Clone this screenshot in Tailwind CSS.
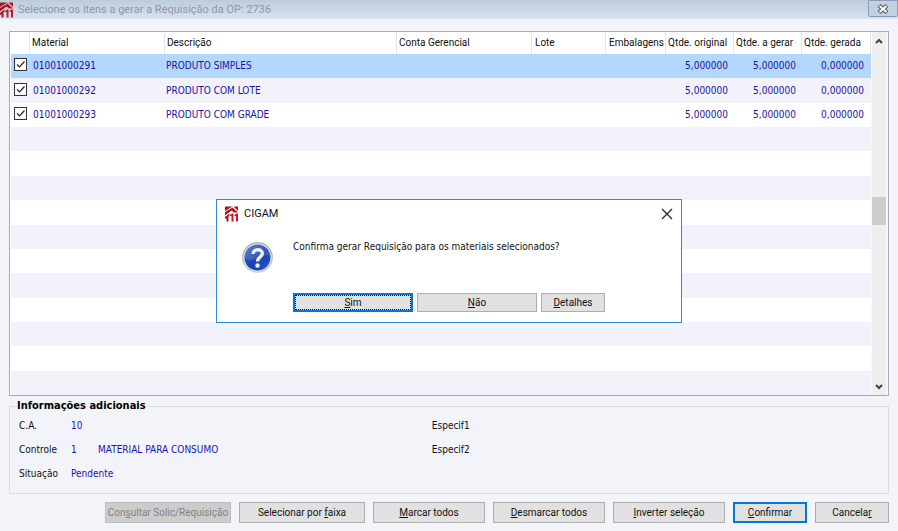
<!DOCTYPE html>
<html lang="pt-BR">
<head>
<meta charset="utf-8">
<meta name="viewport" content="width=device-width, initial-scale=1">
<title>CIGAM - Requisição da OP</title>
<script src="https://cdn.jsdelivr.net/npm/@tailwindcss/browser@4"></script>
</head>
<body class="flex h-screen min-h-[500px] min-w-[860px] flex-col bg-[#f3f4fa] font-['DejaVu_Sans_Condensed','DejaVu_Sans',sans-serif] text-[10px] leading-4 text-[#111]">

<svg class="hidden" aria-hidden="true">
  <symbol id="logo" viewBox="0 0 14 16">
    <path d="M0 .5H7.500L0 5z" fill="#a3141d"/>
    <path d="M8.500 .5H13V5z" fill="#b5121c"/>
    <path d="M0 6 7.500 1.500 13 6.500H9L6.500 4.500 0 9.500z" fill="#b5121c"/>
    <path d="M0 11 4.500 7.500V9.500L3.500 10.500V15.500H1.500V12L0 13z" fill="#a3141d"/>
    <path d="M5 9 7 7.500H8.500V15.500H6.500V10H5z" fill="#d3141f"/>
    <path d="M9.500 9 11.500 7.500H13V15.500H11V10H9.500z" fill="#d3141f"/>
  </symbol>
</svg>

<header class="flex h-[19px] shrink-0 items-center bg-linear-to-b from-[#bdccda] to-[#d6e4f1]">
  <svg class="h-4 w-[14px]"><use href="#logo"/></svg>
  <h1 class="ml-1 font-[Roboto,sans-serif] text-[11px] text-[#8f979f]">Selecione os itens a gerar a Requisição da OP: 2736</h1>
  <button type="button" aria-label="Fechar janela" class="ml-auto flex h-[17px] w-[30px] items-center justify-center self-start rounded-b-[2px] border border-[#8b9cb8] bg-[#c3d0df]">
    <svg class="h-[10px] w-3" viewBox="0 0 12 10"><path d="M2 1.500 10 8.500M10 1.500 2 8.500" stroke="#555c69" stroke-width="4.200"/><path d="M2.500 2 9.500 8M9.500 2 2.500 8" stroke="#fff" stroke-width="2"/></svg>
  </button>
</header>

<main class="flex min-h-0 flex-1 flex-col px-[9px] pt-3 pb-2">
  <section class="flex min-h-0 flex-1 border border-[#a9abb2] bg-[#f3f4fa]" aria-label="Materiais">
    <table class="flex min-w-0 flex-1 flex-col bg-white pl-px">
      <thead class="block font-[Roboto,sans-serif] whitespace-nowrap">
        <tr class="grid h-[22px] grid-cols-[19px_135px_1fr_135px_74px_60px_68px_68px_69px] items-stretch text-left">
          <th class="border-r border-[#e4e4e4]" aria-label="Selecionado"></th>
          <th class="border-r border-[#e4e4e4] pt-[3px] pl-[2px] font-normal">Material</th>
          <th class="border-r border-[#e4e4e4] pt-[3px] pl-[2px] font-normal">Descrição</th>
          <th class="border-r border-[#e4e4e4] pt-[3px] pl-[2px] font-normal">Conta Gerencial</th>
          <th class="border-r border-[#e4e4e4] pt-[3px] pl-[3px] font-normal">Lote</th>
          <th class="border-r border-[#e4e4e4] pt-[3px] pl-[3px] font-normal">Embalagens</th>
          <th class="border-r border-[#e4e4e4] pt-[3px] pl-[2px] font-normal">Qtde. original</th>
          <th class="border-r border-[#e4e4e4] pt-[3px] pl-[2px] font-normal">Qtde. a gerar</th>
          <th class="border-r border-[#e4e4e4] pt-[3px] pl-[2px] font-normal">Qtde. gerada</th>
        </tr>
      </thead>
      <tbody id="linhas" class="grid min-h-0 flex-1 auto-rows-fr text-[#1c10a8]"></tbody>
    </table>
    <div class="flex w-[17px] flex-col items-center border-r-2 border-l border-[#f8f8fb] bg-[#efeff0]" role="scrollbar" aria-controls="linhas" aria-valuenow="50">
      <svg class="mt-[3px] h-3 w-3 shrink-0" viewBox="0 0 12 12"><path d="M3 8 6 5 9 8" fill="none" stroke="#444" stroke-width="2"/></svg>
      <div class="flex w-full flex-1 items-center pb-[6px]"><div class="h-7 w-full bg-[#cdcdcd]"></div></div>
      <svg class="mb-[2px] h-3 w-3 shrink-0" viewBox="0 0 12 12"><path d="M3 4 6 7 9 4" fill="none" stroke="#444" stroke-width="2"/></svg>
    </div>
  </section>

  <fieldset class="mt-1 h-[94px] shrink-0 border border-[#dcdde1] px-[9px]">
    <legend class="-ml-1 px-[2px] text-[11px] leading-3 font-bold text-black">Informações adicionais</legend>
    <div class="flex pt-[6px]">
      <dl class="grid w-12/25 grid-cols-[52px_27px_1fr] gap-y-2">
        <dt>C.A.</dt><dd class="col-span-2 text-[#1c10b8]">10</dd>
        <dt>Controle</dt><dd class="text-[#1c10b8]">1</dd><dd class="text-[#1c10b8]">MATERIAL PARA CONSUMO</dd>
        <dt>Situação</dt><dd class="col-span-2 text-[#1c10b8]">Pendente</dd>
      </dl>
      <dl class="flex flex-col gap-y-2"><dt>Especif1</dt><dt>Especif2</dt></dl>
    </div>
  </fieldset>

  <div class="mt-2 flex shrink-0 justify-end gap-2 font-[Roboto,sans-serif] whitespace-nowrap">
    <button type="button" disabled class="h-[21px] w-[126px] border border-[#bfbfbf] bg-[#cccccc] text-[#838383]">Con<u>s</u>ultar Solic/Requisição</button>
    <button type="button" class="h-[21px] w-[126px] border border-[#adadad] bg-[#e1e1e1]">Selecionar por <u>f</u>aixa</button>
    <button type="button" class="h-[21px] w-28 border border-[#adadad] bg-[#e1e1e1]"><u>M</u>arcar todos</button>
    <button type="button" class="h-[21px] w-28 border border-[#adadad] bg-[#e1e1e1]"><u>D</u>esmarcar todos</button>
    <button type="button" class="h-[21px] w-28 border border-[#adadad] bg-[#e1e1e1]"><u>I</u>nverter seleção</button>
    <button type="button" class="h-[21px] w-[74px] border-2 border-[#0078d7] bg-[#e1e1e1]"><u>C</u>onfirmar</button>
    <button type="button" class="h-[21px] w-[74px] border border-[#adadad] bg-[#e1e1e1]">Cancela<u>r</u></button>
  </div>
</main>

<div class="pointer-events-none fixed inset-0 flex items-center justify-center pb-[9px]">
  <div role="dialog" aria-labelledby="titulo" class="pointer-events-auto flex w-[466px] flex-col border border-[#2b8bd8] bg-white pb-[10px]">
    <div class="flex h-7 items-center px-2">
      <svg class="h-4 w-[14px]"><use href="#logo"/></svg>
      <h2 id="titulo" class="ml-[5px] font-[Roboto,sans-serif] text-[11px]">CIGAM</h2>
      <button type="button" aria-label="Fechar" class="ml-auto flex size-3"><svg class="size-3" viewBox="0 0 12 12"><path d="M1 1 11 11M11 1 1 11" stroke="#222" stroke-width="1.200"/></svg></button>
    </div>
    <div class="flex h-[65px] pl-[25px]">
      <svg class="mt-[14px] size-8" viewBox="0 0 32 32">
        <defs>
          <linearGradient id="aro" x2="0" y2="1"><stop stop-color="#999"/><stop offset="1" stop-color="#c8c8c8"/></linearGradient>
          <linearGradient id="azul" x2="1" y2="1"><stop stop-color="#3b6fd6"/><stop offset=".5" stop-color="#1a40ac"/><stop offset="1" stop-color="#2356d4"/></linearGradient>
        </defs>
        <circle cx="15.500" cy="15.500" r="15.300" fill="url(#aro)"/>
        <circle cx="15.500" cy="15.500" r="14.300" fill="#dedede"/>
        <circle cx="15.500" cy="15.500" r="13" fill="url(#azul)"/>
        <path d="M2.500 15.500A13 13 0 0 1 28.500 13.500Q20 12 13 17 8 20 2.500 15.500z" fill="#fff" opacity=".13"/>
        <path d="M11 12C11 6.500 20.300 6.500 20.300 11.500 20.300 15 15.500 15 15.500 19.500" fill="none" stroke="#eef1f7" stroke-width="3.400"/>
        <circle cx="15.500" cy="23.500" r="2.200" fill="#eef1f7"/>
      </svg>
      <p class="mt-[11px] ml-[19px]">Confirma gerar Requisição para os materiais selecionados?</p>
    </div>
    <div class="flex gap-1 pl-[76px] font-[Roboto,sans-serif]">
      <button type="button" class="h-[19px] w-[120px] border-2 border-[#0078d7] bg-[#e1e1e1]"><span class="flex h-full items-center justify-center border border-dotted border-black"><u>S</u>im</span></button>
      <button type="button" class="h-[19px] w-[120px] border border-[#adadad] bg-[#e1e1e1]"><u>N</u>ão</button>
      <button type="button" class="h-[19px] w-16 border border-[#adadad] bg-[#e1e1e1]"><u>D</u>etalhes</button>
    </div>
  </div>
</div>

<script>
const itens = [
  ["01001000291", "PRODUTO SIMPLES", "5,000000", "5,000000", "0,000000"],
  ["01001000292", "PRODUTO COM LOTE", "5,000000", "5,000000", "0,000000"],
  ["01001000293", "PRODUTO COM GRADE", "5,000000", "5,000000", "0,000000"],
];
const colunas = "grid grid-cols-[19px_135px_1fr_135px_74px_60px_68px_68px_69px] items-center";
let html = "";
for (let i = 0; i < 14; i++) {
  const fundo = i === 0 ? "bg-[#b2d8ff]" : i % 2 ? "bg-[#f2f3fa]" : "bg-white";
  const d = itens[i];
  html += `<tr class="${colunas} ${fundo}">` + (d ? `
    <td class="pb-[3px] pl-[3px]"><label class="grid size-[13px]"><input type="checkbox" checked aria-label="${d[0]}" class="col-start-1 row-start-1 size-[13px] appearance-none border border-[#333] bg-white"><svg class="pointer-events-none col-start-1 row-start-1 size-[13px]" viewBox="0 0 13 13"><path d="M3 6.500 5.500 9 10.500 3.500" fill="none" stroke="#222" stroke-width="1.200"/></svg></label></td>
    <td class="pl-[3px]">${d[0]}</td><td class="pl-px">${d[1]}</td><td></td><td></td><td></td>
    <td class="pr-[6px] text-right">${d[2]}</td><td class="pr-[6px] text-right">${d[3]}</td><td class="pr-[7px] text-right">${d[4]}</td>` : `<td></td>`) + `</tr>`;
}
document.getElementById("linhas").innerHTML = html;
</script>
</body>
</html>
